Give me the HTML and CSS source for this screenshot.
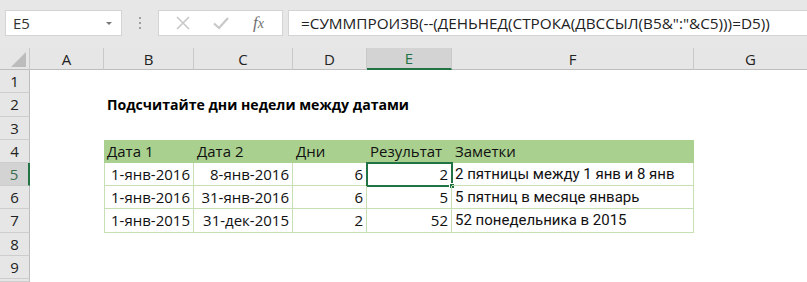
FILE: index.html
```html
<!DOCTYPE html>
<html lang="ru">
<head>
<meta charset="utf-8">
<link rel="stylesheet" href="styles.css">
</head>
<body>
<div class="app">
  <div class="toolbar">
    <div class="namebox"><span>E5</span><span class="dd"></span></div>
    <div class="grip"><i></i><i></i><i></i></div>
    <div class="fnbox">
      <svg class="ico" width="16" height="16" viewBox="0 0 16 16"><path d="M2 2 L14 14 M14 2 L2 14" stroke="#c8c8c8" stroke-width="1.6" fill="none"/></svg>
      <svg class="ico" width="18" height="16" viewBox="0 0 18 16"><path d="M2 8.5 L7 13 L16 3" stroke="#c8c8c8" stroke-width="2.2" fill="none"/></svg>
      <span class="fx"><i>f</i><i class="x">x</i></span>
    </div>
    <div class="formula">=СУММПРОИЗВ(--(ДЕНЬНЕД(СТРОКА(ДВССЫЛ(B5&amp;":"&amp;C5)))=D5))</div>
  </div>
  <div class="sheet">
    <div class="row colhead">
      <div class="corner"><span class="tri"></span></div>
      <div class="ch">A</div><div class="ch">B</div><div class="ch">C</div><div class="ch">D</div><div class="ch sel">E</div><div class="ch">F</div><div class="ch last">G</div>
    </div>
    <div class="row h23"><div class="rh">1</div></div>
    <div class="row h24"><div class="rh">2</div><div></div><div class="title">Подсчитайте дни недели между датами</div></div>
    <div class="row h23"><div class="rh">3</div></div>
    <div class="row h23"><div class="rh">4</div><div></div>
      <div class="th">Дата 1</div><div class="th">Дата 2</div><div class="th">Дни</div><div class="th">Результат</div><div class="th">Заметки</div>
    </div>
    <div class="row h23"><div class="rh rsel">5</div><div></div>
      <div class="td first num">1-янв-2016</div><div class="td num">8-янв-2016</div><div class="td num">6</div><div class="td num active">2<span class="handle"></span></div><div class="td note">2 пятницы между 1 янв и 8 янв</div>
    </div>
    <div class="row h23"><div class="rh">6</div><div></div>
      <div class="td first num">1-янв-2016</div><div class="td num">31-янв-2016</div><div class="td num">6</div><div class="td num">5</div><div class="td note">5 пятниц в месяце январь</div>
    </div>
    <div class="row h24"><div class="rh">7</div><div></div>
      <div class="td first num">1-янв-2015</div><div class="td num">31-дек-2015</div><div class="td num">2</div><div class="td num">52</div><div class="td note">52 понедельника в 2015</div>
    </div>
    <div class="row h23"><div class="rh">8</div></div>
    <div class="row h23"><div class="rh">9</div></div>
    <div class="row h3"><div class="rh"></div></div>
  </div>
</div>
</body>
</html>
```
FILE: styles.css
```css
* { box-sizing: border-box; }
html, body { margin: 0; padding: 0; background: #fff; }
body { width: 807px; height: 282px; overflow: hidden; font-family: "Open Sans", "Noto Sans", sans-serif; color: #1f1f1f; }

.toolbar { height: 48px; background: #e7e7e7; display: flex; align-items: flex-start; padding: 10px 0 0 5px; }
.namebox { width: 117px; height: 26px; background: #fff; border: 1px solid #d4d4d4; display: flex; align-items: center; justify-content: space-between; padding: 0 9px 0 7px; font-size: 15px; color: #333; }
.dd { width: 0; height: 0; border-left: 3px solid transparent; border-right: 3px solid transparent; border-top: 3px solid #777; }
.grip { width: 36px; height: 26px; display: flex; flex-direction: column; align-items: center; justify-content: center; gap: 3px; }
.grip i { width: 2px; height: 2px; background: #a0a0a0; display: block; }
.fnbox { width: 125px; height: 26px; background: #fff; border: 1px solid #d4d4d4; display: flex; align-items: center; padding-left: 16px; gap: 21px; }
.fx { font-family: "Liberation Serif", serif; font-size: 17px; color: #707070; font-style: italic; margin-left: 2px; }
.fx .x { font-size: 14px; }
.formula { margin-left: 5px; flex: 1; height: 26px; background: #fff; border: 1px solid #d4d4d4; border-right: 0; padding-left: 12px; font-size: 15.3px; line-height: 24px; color: #222; white-space: nowrap; }

.sheet { height: 234px; overflow: hidden; }
.row { display: grid; grid-template-columns: 30px 74px 90px 99px 74px 85px 242px 113px; }
.h23 { height: 23px; }
.h24 { height: 24px; }
.h3 { height: 3px; }
.colhead { height: 22px; background: #e6e6e6; border-bottom: 1px solid #bdbdbd; }
.corner { position: relative; border-right: 1px solid #c9c9c9; }
.tri { position: absolute; right: 3px; bottom: 3px; width: 0; height: 0; border-left: 15px solid transparent; border-bottom: 15px solid #bcbcbc; }
.ch { border-right: 1px solid #c9c9c9; text-align: center; font-size: 15px; line-height: 22px; color: #222; }
.ch.last { border-right: 0; }
.ch.sel { background: #d3d3d3; color: #217346; border-bottom: 2px solid #217346; height: 22px; line-height: 21px; }
.rh { background: #e6e6e6; border-right: 1px solid #bdbdbd; border-bottom: 1px solid #cdcdcd; text-align: center; font-size: 15px; line-height: 22px; color: #222; }
.rh.rsel { background: #d3d3d3; color: #3b6e50; border-right: 2px solid #217346; }

.title { grid-column: 3 / span 4; font-weight: bold; font-size: 14.1px; line-height: 24px; white-space: nowrap; color: #000; padding-left: 3px; }
.th { background: #a9d08e; font-size: 15px; line-height: 23px; padding-left: 3px; color: #111; white-space: nowrap; }
.td { border-right: 1px solid #c6e0b4; border-bottom: 1px solid #c6e0b4; font-size: 15px; line-height: 22px; padding: 0 3px; white-space: nowrap; color: #111; position: relative; }
.td.note { font-family: Roboto, "Open Sans", sans-serif; font-size: 15px; }
.td.first { border-left: 1px solid #c6e0b4; }
.td.num { text-align: right; }
.active { outline: 2px solid #217346; outline-offset: -1px; }
.handle { position: absolute; right: -4px; bottom: -4px; width: 6px; height: 6px; background: #217346; border: 1px solid #fff; }
```
